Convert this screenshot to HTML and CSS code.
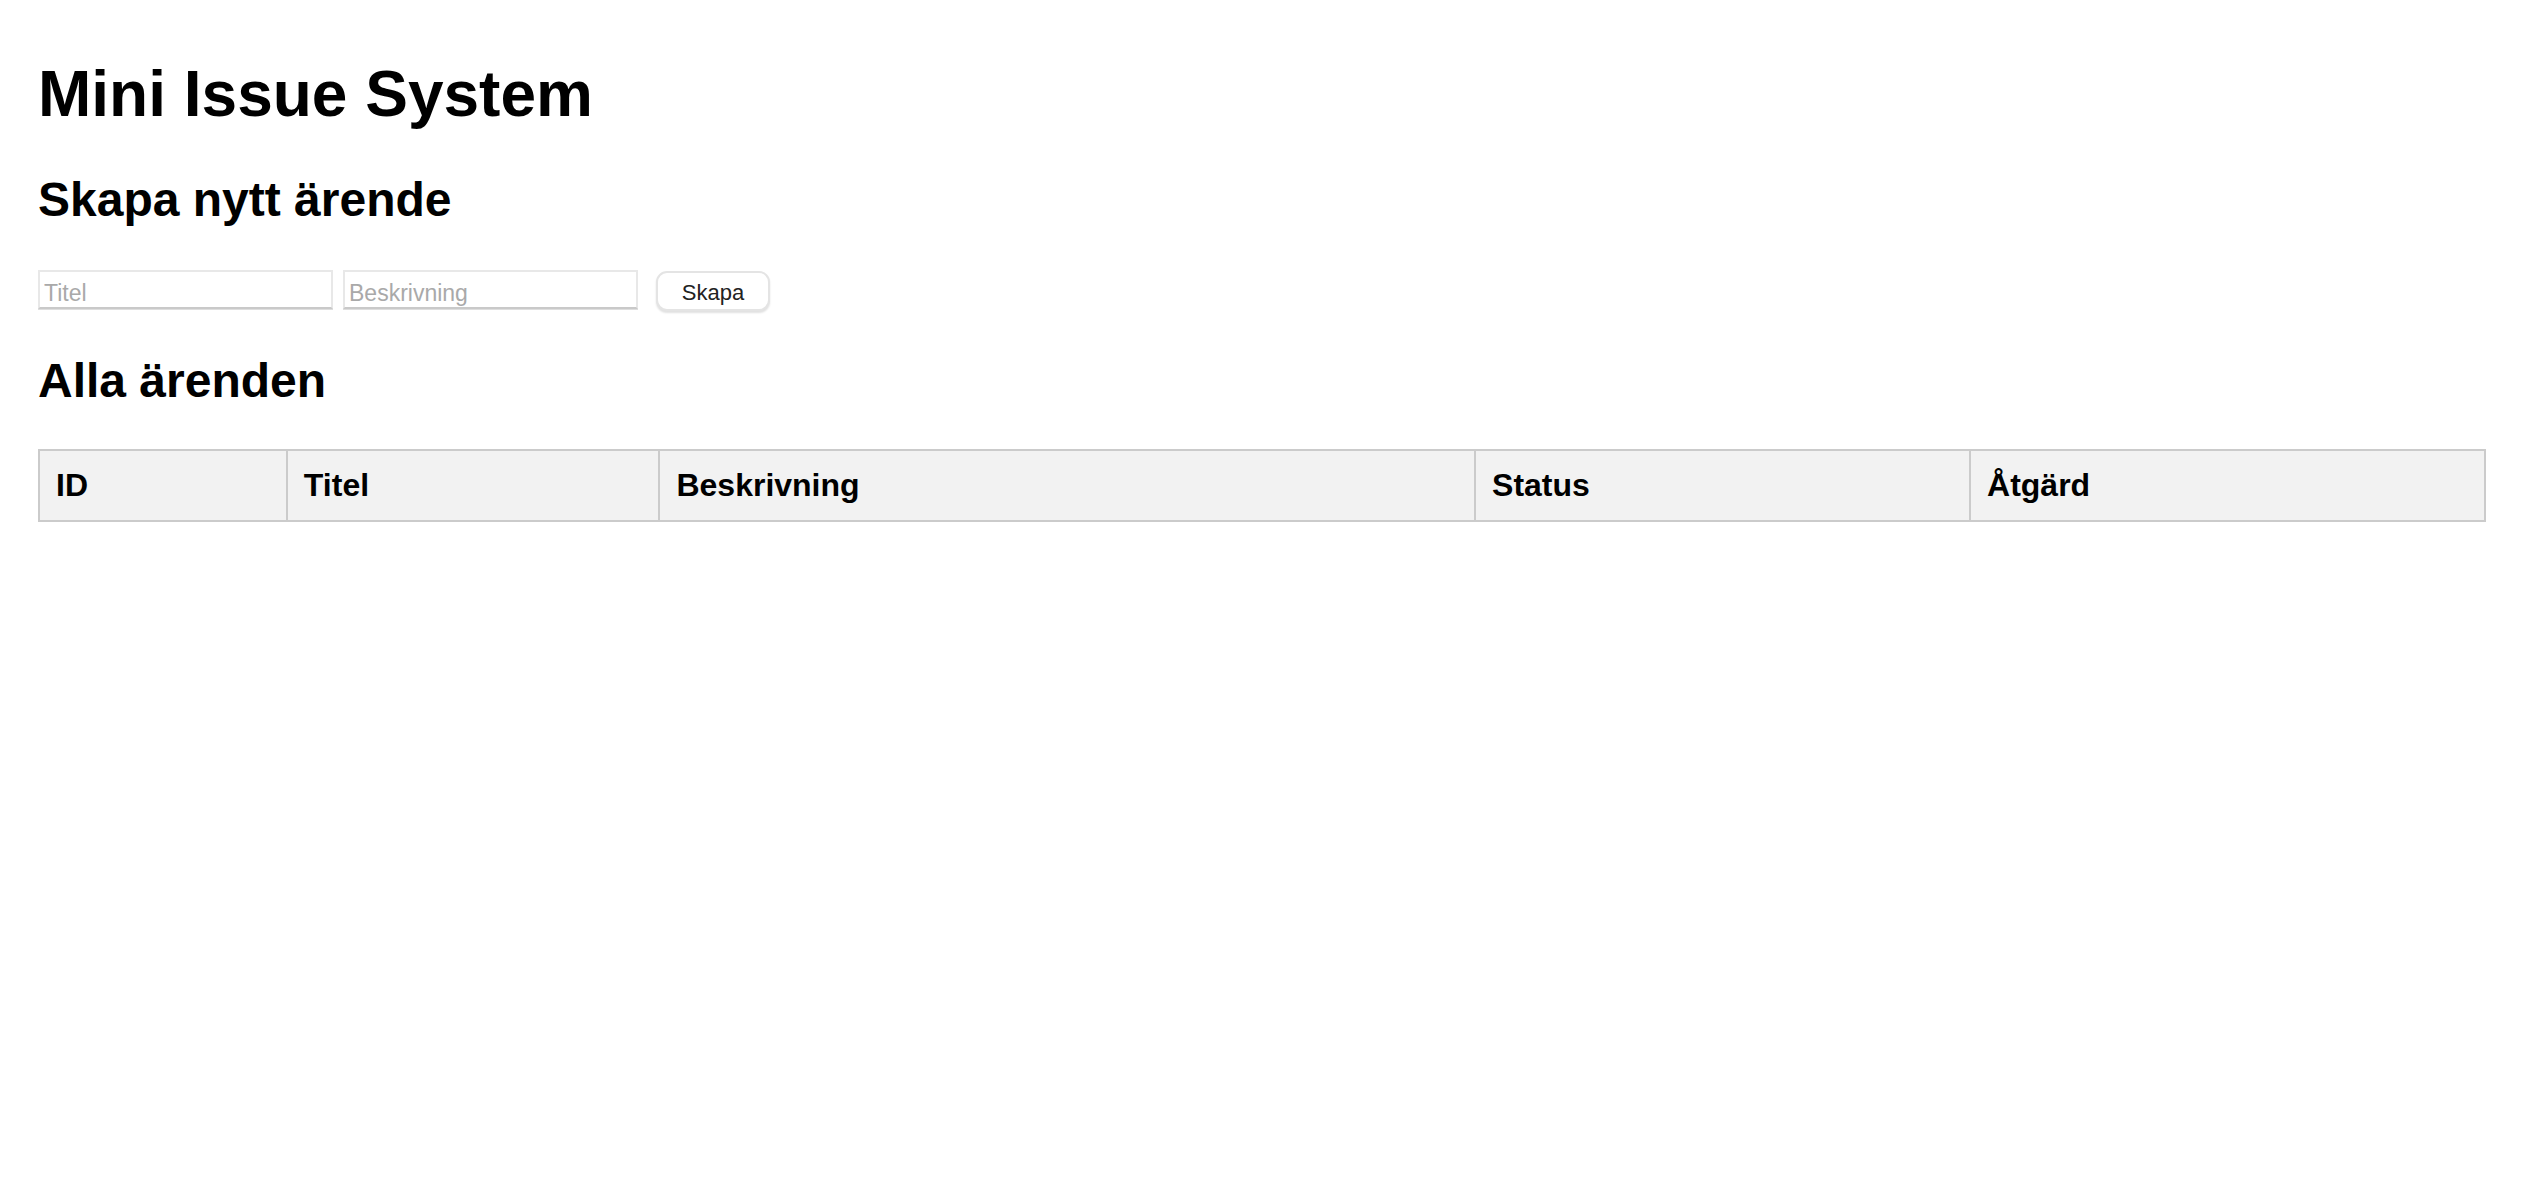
FILE: index.html
```html
<!DOCTYPE html>
<html lang="sv">
<head>
<meta charset="utf-8">
<title>Mini Issue System</title>
<link rel="stylesheet" href="styles.css">
</head>
<body>
<main class="page">
  <h1 class="title">Mini Issue System</h1>
  <h2 class="section-title">Skapa nytt ärende</h2>
  <form class="create-form">
    <input class="field" type="text" placeholder="Titel">
    <input class="field" type="text" placeholder="Beskrivning">
    <button class="btn" type="button">Skapa</button>
  </form>
  <h2 class="section-title">Alla ärenden</h2>
  <table class="issues">
    <thead>
      <tr>
        <th>ID</th>
        <th>Titel</th>
        <th>Beskrivning</th>
        <th>Status</th>
        <th>Åtgärd</th>
      </tr>
    </thead>
    <tbody></tbody>
  </table>
</main>
</body>
</html>
```

FILE: styles.css
```css
html, body {
  margin: 0;
  padding: 0;
  background: #fff;
}

body {
  font-family: "Liberation Sans", Arial, Helvetica, sans-serif;
  color: #000;
}

.page {
  padding: 0 40px 0 38px;
}

.title {
  font-size: 64px;
  line-height: 74px;
  font-weight: 700;
  margin: 57px 0 41px;
}

.section-title {
  font-size: 48px;
  line-height: 56px;
  font-weight: 700;
  margin: 41px 0 40px;
}

.create-form {
  display: flex;
  align-items: flex-start;
  margin: 42px 0;
}

.field {
  box-sizing: border-box;
  width: 295px;
  height: 39px;
  margin: 0 10px 0 0;
  padding: 8px 4px 0;
  border: 2px solid #e8e8e8;
  border-bottom-color: #c9c9c9;
  border-radius: 0;
  box-shadow: 0 1px 0 #dedede;
  font-family: "Liberation Sans", Arial, sans-serif;
  font-size: 23px;
  color: #222;
  background: #fff;
  outline: none;
}

.field::placeholder {
  color: #a9a9a9;
}

.btn {
  box-sizing: border-box;
  width: 114px;
  height: 40px;
  margin: 1px 0 0 8px;
  padding: 3px 0 0;
  border: 2px solid #e4e4e4;
  border-radius: 11px;
  background: #fff;
  box-shadow: 0 2px 2px rgba(0, 0, 0, 0.12);
  font-family: "Liberation Sans", Arial, sans-serif;
  font-size: 22px;
  color: #222;
}

.issues {
  width: 100%;
  border-collapse: collapse;
  margin: 0;
}

.issues th {
  background: #f2f2f2;
  border: 2px solid #cbcbcb;
  padding: 16px;
  text-align: left;
  font-size: 32px;
  font-weight: 700;
}
```
